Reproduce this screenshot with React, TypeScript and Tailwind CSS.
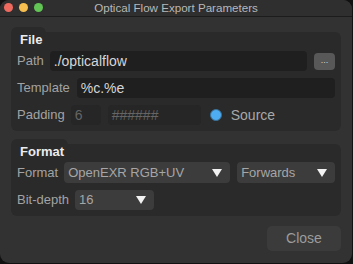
import type { ReactNode } from "react";

const FONT = { fontFamily: '"Liberation Sans", Arial, sans-serif' };

function Caret() {
  return (
    <svg width="10" height="8" viewBox="0 0 10 8" className="shrink-0">
      <path d="M0 0 H10 L5 8 Z" fill="#f2f2f2" />
    </svg>
  );
}

function Select({ value, className }: { value: string; className: string }) {
  return (
    <div
      className={`flex items-center justify-between rounded-[4px] bg-[#3c3c3c] pl-[4px] pr-[8px] text-[13px] text-[#a6a6a6] ${className}`}
    >
      <span>{value}</span>
      <Caret />
    </div>
  );
}

function Group({ title, tabWidth, children }: { title: string; tabWidth: string; children: ReactNode }) {
  return (
    <div>
      <div className={`h-[9px] rounded-t-[6px] bg-[#2a2a2a] ${tabWidth}`} />
      <div className="rounded-b-[6px] rounded-tr-[6px] bg-[#2a2a2a] px-[6px] pb-[6px]">
        <div className="-mt-[4px] pl-[3px] text-[13px] font-bold leading-[16px] text-[#ececec]">{title}</div>
        {children}
      </div>
    </div>
  );
}

export default function App() {
  return (
    <div className="h-[264px] w-[353px] bg-[#111111]" style={FONT}>
      <div className="flex h-[263px] w-[352px] flex-col overflow-hidden rounded-[9px] bg-[#323232]">
        {/* title bar */}
        <div className="relative flex h-[17px] shrink-0 items-center justify-center border-b border-[#1c1c1c] bg-[#2f2f2f]">
          <div className="absolute left-[4px] top-[3px] flex gap-[6px]">
            <span className="h-[9px] w-[9px] rounded-full bg-[#ee6a5f]" />
            <span className="h-[9px] w-[9px] rounded-full bg-[#f5be4f]" />
            <span className="h-[9px] w-[9px] rounded-full bg-[#61c454]" />
          </div>
          <span className="text-[11.6px] leading-[14px] text-[#b8b8b8]">Optical Flow Export Parameters</span>
        </div>

        <div className="flex flex-col px-[11px] pt-[10px]">
          <Group title="File" tabWidth="w-[35px]">
            <div className="mt-[3px] flex flex-col gap-[7px] text-[13px] text-[#a3a3a3]">
              <div className="flex h-[20px] items-center gap-[6px]">
                <span>Path</span>
                <div className="flex h-full flex-1 items-center rounded-[4px] bg-[#1f1f1f] px-[4px] text-[14px] text-[#d6d6d6]">
                  ./opticalflow
                </div>
                <div className="ml-[1px] flex h-[17px] w-[21px] items-end justify-center rounded-[4px] bg-[#585858] pb-[5px] text-[9px] leading-none text-[#d0d0d0]">
                  ...
                </div>
              </div>
              <div className="flex h-[20px] items-center gap-[7px]">
                <span>Template</span>
                <div className="flex h-full flex-1 items-center rounded-[4px] bg-[#1f1f1f] px-[4px] text-[14px] text-[#d6d6d6]">
                  %c.%e
                </div>
              </div>
              <div className="flex h-[20px] items-center gap-[6px]">
                <span>Padding</span>
                <div className="flex h-full w-[30px] items-center rounded-[4px] bg-[#262626] px-[4px] text-[14px] text-[#656565]">
                  6
                </div>
                <div className="ml-[1px] flex h-full w-[93px] items-center rounded-[4px] bg-[#262626] px-[4px] text-[14px] text-[#656565]">
                  ######
                </div>
                <span className="ml-[3px] h-[12px] w-[12px] rounded-full border border-[#3a6f96] bg-[#4dacf2]" />
                <span className="ml-[3px] text-[14px] text-[#a8a8a8]">Source</span>
              </div>
            </div>
          </Group>

          <div className="mt-[8px]">
            <Group title="Format" tabWidth="w-[57px]">
              <div className="mt-[2px] flex flex-col gap-[7px] text-[13px] text-[#a3a3a3]">
                <div className="flex h-[21px] items-center gap-[6px]">
                  <span>Format</span>
                  <Select value="OpenEXR RGB+UV" className="h-full w-[166px]" />
                  <Select value="Forwards" className="ml-[1px] h-full flex-1" />
                </div>
                <div className="flex h-[20px] items-center gap-[6px]">
                  <span>Bit-depth</span>
                  <Select value="16" className="h-full w-[79px]" />
                </div>
              </div>
            </Group>
          </div>

          <div className="mt-[10px] flex justify-end">
            <div className="flex h-[25px] w-[74px] items-center justify-center rounded-[5px] bg-[#3b3b3b] text-[14px] text-[#9c9c9c]">
              Close
            </div>
          </div>
        </div>
      </div>
    </div>
  );
}
